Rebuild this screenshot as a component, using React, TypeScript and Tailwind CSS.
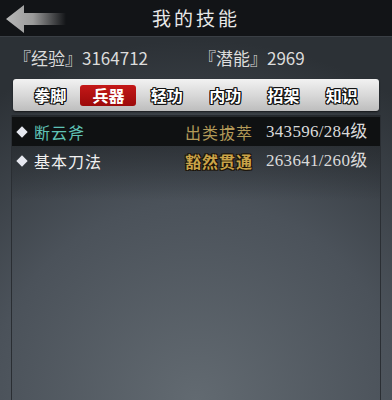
import React from 'react';

const CJK = "font-['Noto_Sans_CJK_SC','Noto_Sans',sans-serif]";
const SERIF = "font-['Liberation_Serif','Noto_Sans_CJK_SC',serif]";

const TABS = ['拳脚', '兵器', '轻功', '内功', '招架', '知识'];

type Skill = { name: string; rank: string; exp: string; active?: boolean };

const SKILLS: Skill[] = [
  { name: '断云斧', rank: '出类拔萃', exp: '343596/284级', active: true },
  { name: '基本刀法', rank: '豁然贯通', exp: '263641/260级' },
];

function BackArrow() {
  return (
    <svg width="64" height="30" viewBox="0 0 64 30">
      <defs>
        <linearGradient id="arrowFade" x1="0" y1="0" x2="1" y2="0">
          <stop offset="0" stopColor="#b8b8b8" />
          <stop offset="0.45" stopColor="#9a9a9a" />
          <stop offset="1" stopColor="#9a9a9a" stopOpacity="0" />
        </linearGradient>
      </defs>
      <path d="M2 15 L20 1 L20 9 L62 9 L62 21 L20 21 L20 29 Z" fill="url(#arrowFade)" />
    </svg>
  );
}

export default function App() {
  return (
    <div
      className={`relative flex h-[400px] w-[392px] flex-col overflow-hidden bg-[radial-gradient(ellipse_95%_90%_at_50%_100%,#626a71,#4b525a_55%,#2c3136)] ${CJK}`}
    >
      {/* header */}
      <div className="relative flex h-[37px] items-center justify-center border-b border-[#3a3f45] bg-[#121417]">
        <div className="absolute left-[4px] top-[4px]">
          <BackArrow />
        </div>
        <h1 className="text-[19px] tracking-[3px] text-[#e8e8e8]">我的技能</h1>
      </div>

      {/* stats */}
      <div className="flex h-[42px] items-center text-[17px] text-[#dcdcdc]">
        <span className="w-[199px] pl-[14px]">『经验』3164712</span>
        <span>『潜能』2969</span>
      </div>

      {/* tabs */}
      <div className="mx-[13px] grid h-[32px] grid-cols-6 items-center rounded-[3px] bg-[linear-gradient(#f2f2f2,#d6d6d6_55%,#bdbdbd)] px-[8px] shadow-[0_1px_2px_rgba(0,0,0,0.6)]">
        {TABS.map((t, i) => (
          <div key={t} className="flex justify-center">
            <span
              className={
                i === 1
                  ? 'flex h-[21px] w-[56px] items-center justify-center rounded-[3px] bg-[linear-gradient(#c41818,#9c0a0a)] text-[16px] font-bold text-white'
                  : 'text-[16px] font-bold text-white [text-shadow:1px_1px_0_#111,-1px_-1px_0_#111,1px_-1px_0_#111,-1px_1px_0_#111,0_1px_0_#111,0_-1px_0_#111,1px_0_0_#111,-1px_0_0_#111]'
              }
            >
              {t}
            </span>
          </div>
        ))}
      </div>

      {/* list panel */}
      <div className="mx-[11px] mt-[4px] flex-1 border-x border-[#2a2e33] bg-[linear-gradient(#24282c,transparent_30%)] pt-[2px]">
        {SKILLS.map((s) => (
          <div
            key={s.name}
            className={`flex h-[29px] items-center text-[16px] ${s.active ? 'bg-[#0f1112]' : ''}`}
          >
            <span className="ml-[6px] h-[8px] w-[8px] rotate-45 bg-[#e6e8f0]" />
            <span
              className={`ml-[8px] w-[151px] tracking-[1px] ${s.active ? 'text-[#5fc2b6]' : 'text-[#f0f0f0]'}`}
            >
              {s.name}
            </span>
            <span
              className={`w-[81px] tracking-[1px] ${
                s.active
                  ? 'text-[#b39a58]'
                  : 'font-bold text-[#c9a348] [text-shadow:1px_1px_0_#1a1208,-1px_-1px_0_#1a1208,1px_-1px_0_#1a1208,-1px_1px_0_#1a1208]'
              }`}
            >
              {s.rank}
            </span>
            <span className={`${SERIF} text-[17px] tracking-[0.3px] text-[#dadada]`}>{s.exp}</span>
          </div>
        ))}
      </div>
    </div>
  );
}
